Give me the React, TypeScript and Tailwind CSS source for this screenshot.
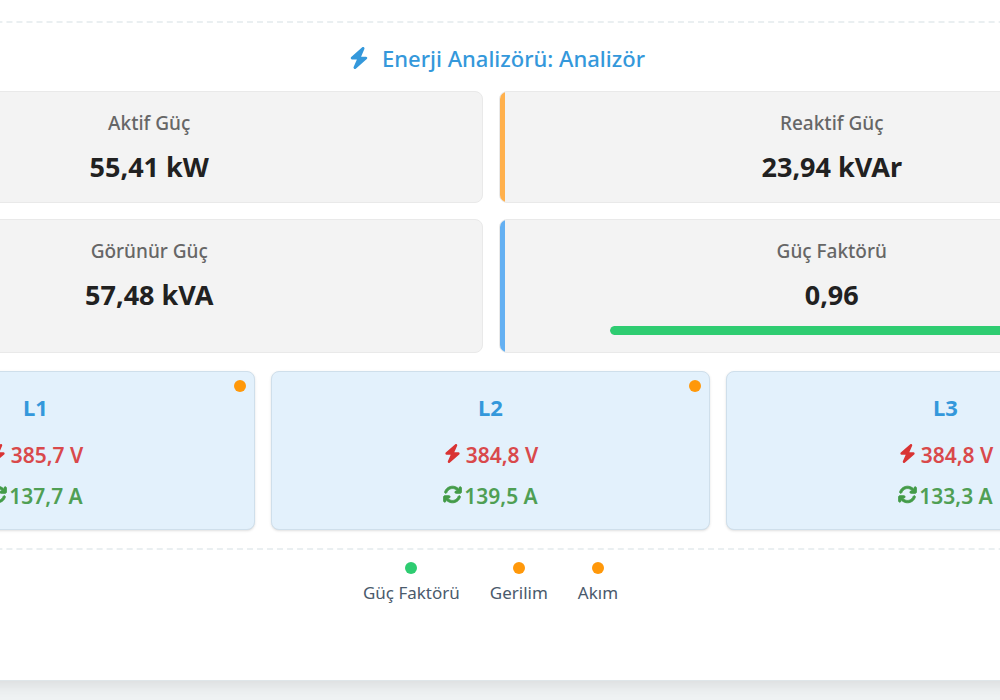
import React from 'react';
import { FaArrowsRotate, FaBolt } from 'react-icons/fa6';
import clsx from 'clsx';

interface Reading {
  label: string;
  value: string;
  accent: string;
  progress?: number;
}

interface Phase {
  name: string;
  voltage: string;
  current: string;
}

const readings: Reading[] = [
  { label: 'Aktif Güç', value: '55,41 kW', accent: 'bg-[#66bb6a]' },
  { label: 'Reaktif Güç', value: '23,94 kVAr', accent: 'bg-[#ffb04c]' },
  { label: 'Görünür Güç', value: '57,48 kVA', accent: 'bg-[#ab47bc]' },
  { label: 'Güç Faktörü', value: '0,96', accent: 'bg-[#64b0f2]', progress: 96 },
];

const phases: Phase[] = [
  { name: 'L1', voltage: '385,7 V', current: '137,7 A' },
  { name: 'L2', voltage: '384,8 V', current: '139,5 A' },
  { name: 'L3', voltage: '384,8 V', current: '133,3 A' },
];

const legend = [
  { label: 'Güç Faktörü', color: 'bg-[#2ecc71]' },
  { label: 'Gerilim', color: 'bg-[#ff980a]' },
  { label: 'Akım', color: 'bg-[#ff980a]' },
];

const ReadingCard: React.FC<Reading> = ({ label, value, accent, progress }) => (
  <div className="relative overflow-hidden rounded-lg border border-[#e9e9e9] bg-[#f3f3f3] px-4 py-[17px] text-center">
    <div className={clsx('absolute inset-y-0 left-0 w-[5px]', accent)} />
    <div className="text-[19px] leading-7 font-medium text-[#666666]">{label}</div>
    <div className="mt-3 text-[27px] leading-9 font-bold text-[#212121]">{value}</div>
    {progress !== undefined && (
      <div className="mx-auto mt-[13px] h-[9px] w-[70%] overflow-hidden rounded-full bg-[#e0e0e0]">
        <div className="h-full rounded-full bg-[#2ecc71]" style={{ width: `${progress}%` }} />
      </div>
    )}
  </div>
);

const PhaseCard: React.FC<Phase> = ({ name, voltage, current }) => (
  <div className="relative rounded-lg border border-[#cfdfeb] bg-[#e3f1fc] pt-[15px] pb-3 text-center shadow-sm">
    <span className="absolute top-2 right-2 size-3 rounded-full bg-[#ff980a]" />
    <div className="text-[22px] leading-10 font-bold text-[#3498db]">{name}</div>
    <div className="mt-2 flex items-center justify-center gap-1 text-[21px] leading-[41px] font-semibold text-[#d9494b]">
      <FaBolt className="mb-1 size-[19px] text-[#d93333]" />
      {voltage}
    </div>
    <div className="flex items-center justify-center gap-[2px] text-[21px] leading-[41px] font-semibold text-[#4f9f54]">
      <FaArrowsRotate className="mb-1 size-[19px] stroke-[24] text-[#439b48]" />
      {current}
    </div>
  </div>
);

export default function App() {
  return (
    <div className="min-h-screen overflow-hidden bg-[#f0f3f4] font-['Noto_Sans','Open_Sans',sans-serif]">
      <main className="-mr-[199px] -ml-[218px] border-b border-[#dfe6e9] bg-white px-[34px] pt-[21px] pb-[73px] shadow-[0_4px_16px_rgba(0,0,0,0.1)]">
        <section className="border-y-2 border-dashed border-[#eaeff1] pt-[15px] pb-[18px]">
          <h2 className="mb-[13px] flex items-center justify-center gap-3 pl-3 text-[22px] leading-10 font-medium text-[#3498db]">
            <FaBolt className="size-[22px]" />
            Enerji Analizörü: Analizör
          </h2>
          <div className="grid grid-cols-2 gap-4">
            {readings.map((reading) => (
              <ReadingCard key={reading.label} {...reading} />
            ))}
          </div>
          <div className="mt-[18px] grid grid-cols-3 gap-4">
            {phases.map((phase) => (
              <PhaseCard key={phase.name} {...phase} />
            ))}
          </div>
        </section>
        <ul className="mt-3 flex justify-center gap-[30px]">
          {legend.map((item) => (
            <li key={item.label} className="flex flex-col items-center text-[17px] leading-7 text-[#4a5a6c]">
              <span className={clsx('mb-[5px] size-3 rounded-full', item.color)} />
              {item.label}
            </li>
          ))}
        </ul>
      </main>
    </div>
  );
}
